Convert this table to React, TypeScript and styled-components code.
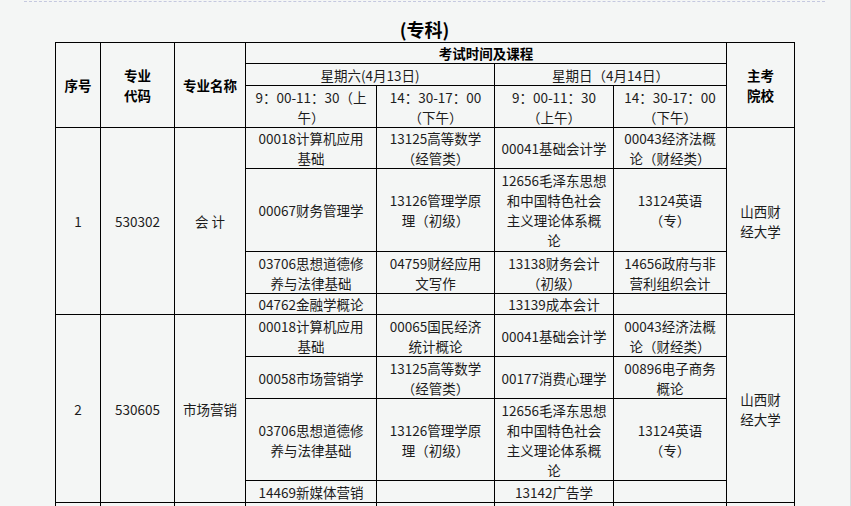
import React from "react";
import styled, { createGlobalStyle } from "styled-components";

const GlobalStyle = createGlobalStyle`
  html, body {
    margin: 0;
    padding: 0;
    background: #f4f6f5;
  }
  body {
    font-family: "Noto Sans CJK SC", sans-serif;
    color: #1c1c1c;
    overflow: hidden;
  }
`;

const Page = styled.div`
  width: 851px;
  min-height: 506px;
  box-sizing: border-box;
  border-right: 1px solid #d9dbdd;
  padding-top: 1px;
`;

const DashedRule = styled.div`
  margin: 0 25px 0 24px;
  border-top: 1px dashed #c5c9df;
`;

const Section = styled.div`
  width: 739px;
  margin-left: 55px;
`;

const Title = styled.h2`
  margin: 15px 0 1px;
  height: 24px;
  line-height: 24px;
  font-size: 18px;
  font-weight: bold;
  text-align: center;
  color: #000;
`;

const Table = styled.table`
  width: 739px;
  table-layout: fixed;
  border-collapse: collapse;
  font-size: 13.5px;
  line-height: 20px;
`;

const Col = styled.col<{ $w: number }>`
  width: ${(p) => p.$w}px;
`;

const Cell = styled.td<{ $head?: boolean; $h?: number }>`
  border: 1px solid #000;
  padding: 0;
  height: ${(p) => (p.$h ? `${p.$h}px` : "auto")};
  text-align: center;
  vertical-align: middle;
  white-space: nowrap;
  font-weight: ${(p) => (p.$head ? "bold" : "normal")};
  color: ${(p) => (p.$head ? "#000" : "#1c1c1c")};
`;

const EmptyCell = styled(Cell)`
  height: 40px;
`;

const Text = styled.div`
  line-height: 20px;
`;

const widths = [45, 74, 71, 131, 118, 119, 113, 68];

const Lines: React.FC<{ text: string }> = ({ text }) => {
  const parts = text.split("|");
  return (
    <>
      {parts.map((p, i) => (
        <Text key={i}>{p || "\u00a0"}</Text>
      ))}
    </>
  );
};

type Group = {
  no: string;
  code: string;
  name: string;
  school: string;
  heights: number[];
  rows: string[][];
};

const groups: Group[] = [
  {
    no: "1",
    code: "530302",
    name: "会 计",
    school: "山西财|经大学",
    heights: [40, 82, 41, 20],
    rows: [
      ["00018计算机应用|基础", "13125高等数学|（经管类）", "00041基础会计学", "00043经济法概|论（财经类）"],
      ["00067财务管理学", "13126管理学原|理（初级）", "12656毛泽东思想|和中国特色社会|主义理论体系概|论", "13124英语|（专）"],
      ["03706思想道德修|养与法律基础", "04759财经应用|文写作", "13138财务会计|（初级）", "14656政府与非|营利组织会计"],
      ["04762金融学概论", "", "13139成本会计", ""],
    ],
  },
  {
    no: "2",
    code: "530605",
    name: "市场营销",
    school: "山西财|经大学",
    heights: [41, 41, 81, 21],
    rows: [
      ["00018计算机应用|基础", "00065国民经济|统计概论", "00041基础会计学", "00043经济法概|论（财经类）"],
      ["00058市场营销学", "13125高等数学|（经管类）", "00177消费心理学", "00896电子商务|概论"],
      ["03706思想道德修|养与法律基础", "13126管理学原|理（初级）", "12656毛泽东思想|和中国特色社会|主义理论体系概|论", "13124英语|（专）"],
      ["14469新媒体营销", "", "13142广告学", ""],
    ],
  },
];

export default function App() {
  return (
    <>
      <GlobalStyle />
      <Page>
        <DashedRule />
        <Section>
          <Title>(专科)</Title>
          <Table>
            <colgroup>
              {widths.map((w, i) => (
                <Col key={i} $w={w} />
              ))}
            </colgroup>
            <thead>
              <tr>
                <Cell $head rowSpan={3}>序号</Cell>
                <Cell $head rowSpan={3}>
                  <Lines text="专业|代码" />
                </Cell>
                <Cell $head rowSpan={3}>专业名称</Cell>
                <Cell $head colSpan={4} $h={20}>考试时间及课程</Cell>
                <Cell $head rowSpan={3}>
                  <Lines text="主考|院校" />
                </Cell>
              </tr>
              <tr>
                <Cell colSpan={2} $h={21}>星期六(4月13日)</Cell>
                <Cell colSpan={2}>星期日（4月14日）</Cell>
              </tr>
              <tr>
                <Cell $h={41}>
                  <Lines text="9：00-11：30（上|午）" />
                </Cell>
                <Cell>
                  <Lines text="14：30-17：00|（下午）" />
                </Cell>
                <Cell>
                  <Lines text="9：00-11：30|（上午）" />
                </Cell>
                <Cell>
                  <Lines text="14：30-17：00|（下午）" />
                </Cell>
              </tr>
            </thead>
            <tbody>
              {groups.map((g) =>
                g.rows.map((r, ri) => (
                  <tr key={g.no + "-" + ri}>
                    {ri === 0 && (
                      <>
                        <Cell rowSpan={g.rows.length}>{g.no}</Cell>
                        <Cell rowSpan={g.rows.length}>{g.code}</Cell>
                        <Cell rowSpan={g.rows.length}>{g.name}</Cell>
                      </>
                    )}
                    {r.map((c, ci) => (
                      <Cell key={ci} $h={ci === 0 ? g.heights[ri] : undefined}>
                        <Lines text={c} />
                      </Cell>
                    ))}
                    {ri === 0 && (
                      <Cell rowSpan={g.rows.length}>
                        <Lines text={g.school} />
                      </Cell>
                    )}
                  </tr>
                ))
              )}
              <tr>
                {widths.map((_, i) => (
                  <EmptyCell key={i} />
                ))}
              </tr>
            </tbody>
          </Table>
        </Section>
      </Page>
    </>
  );
}
